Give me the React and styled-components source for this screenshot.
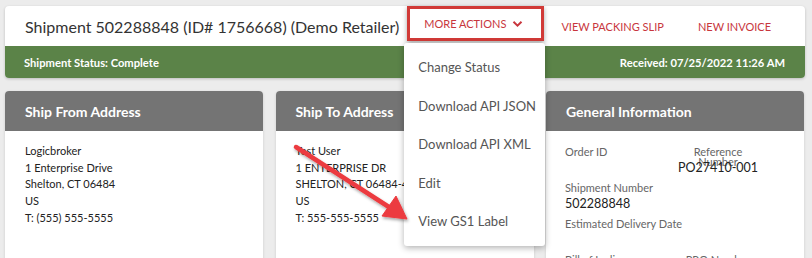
import styled, { createGlobalStyle } from "styled-components";

const GlobalStyle = createGlobalStyle`
  html, body {
    margin: 0;
    padding: 0;
    background: #ececec;
    font-family: Lato, "Open Sans", sans-serif;
    overflow: hidden;
  }
`;

const Page = styled.div`
  position: relative;
  height: 258px;
  overflow: hidden;
  padding: 6px 7px 0 5px;
  box-sizing: border-box;
`;

const HeaderCard = styled.div`
  background: #fff;
  border-radius: 4px;
  box-shadow: 0 1px 3px rgba(0, 0, 0, 0.2);
`;

const TitleRow = styled.div`
  display: flex;
  align-items: center;
  height: 40px;
  padding: 0 17px 0 20px;
`;

const Title = styled.h1`
  margin: 0;
  font-size: 16px;
  font-weight: 400;
  color: #333;
  white-space: nowrap;
`;

const Actions = styled.div`
  display: flex;
  align-items: center;
  margin-left: auto;
  height: 100%;
`;

const ActionWrap = styled.div`
  position: relative;
  display: flex;
  align-items: center;
  height: 100%;
`;

const ActionButton = styled.button`
  display: flex;
  align-items: center;
  gap: 6px;
  height: ${({ $highlight }) => ($highlight ? "35px" : "100%")};
  padding: ${({ $highlight }) => ($highlight ? "0 18px 0 14px" : "0 17px")};
  margin-top: ${({ $highlight }) => ($highlight ? "-5px" : "0")};
  border: ${({ $highlight }) => ($highlight ? "3px solid #d13a37" : "none")};
  box-shadow: ${({ $highlight }) =>
    $highlight ? "0 2px 5px rgba(0,0,0,0.35)" : "none"};
  background: transparent;
  font-family: inherit;
  font-size: 11px;
  color: #c8363d;
  text-transform: uppercase;
  white-space: nowrap;
  cursor: pointer;
`;

const Dropdown = styled.ul`
  position: absolute;
  top: 37px;
  left: -3px;
  width: 141px;
  margin: 0;
  padding: 5px 0;
  list-style: none;
  background: #fff;
  border-radius: 3px;
  box-shadow: 0 2px 6px rgba(0, 0, 0, 0.3);
  z-index: 5;
`;

const DropdownItem = styled.li`
  height: 38.5px;
  display: flex;
  align-items: center;
  padding-left: 14px;
  font-size: 13px;
  color: #555;
  white-space: nowrap;
`;

const StatusBar = styled.div`
  display: flex;
  justify-content: space-between;
  align-items: center;
  height: 32px;
  padding: 0 20px 0 19px;
  background: #5b8348;
  border-radius: 0 0 4px 4px;
  color: #fff;
  font-size: 11.2px;
  font-weight: 700;
`;

const CardGrid = styled.div`
  display: grid;
  grid-template-columns: repeat(3, 258px);
  column-gap: 12.5px;
  margin-top: 13px;
`;

const Card = styled.div`
  background: #fff;
  border-radius: 4px 4px 0 0;
  box-shadow: 0 1px 3px rgba(0, 0, 0, 0.15);
  height: 200px;
  overflow: hidden;
`;

const CardHeader = styled.div`
  height: 40px;
  display: flex;
  align-items: center;
  padding: 0 20px;
  background: #747474;
  color: #fff;
  font-size: 14px;
  font-weight: 700;
`;

const Address = styled.div`
  padding: 12px 20px;
  font-size: 11px;
  line-height: 16.7px;
  color: #222;
  white-space: nowrap;
`;

const InfoGrid = styled.div`
  display: grid;
  grid-template-columns: 108px 90px;
  row-gap: 7px;
  padding: 16px 19px;
`;

const Field = styled.div`
  text-align: ${({ $center }) => ($center ? "center" : "left")};
`;

const Label = styled.div`
  height: 13px;
  font-size: 11px;
  line-height: 10px;
  color: #666;
  white-space: ${({ $wrap }) => ($wrap ? "normal" : "nowrap")};
  padding: ${({ $wrap }) => ($wrap ? "0 14px" : "0")};
`;

const Value = styled.div`
  height: 16px;
  font-size: 12.5px;
  line-height: 16px;
  color: #222;
`;

const ArrowLayer = styled.svg`
  position: absolute;
  left: 0;
  top: 0;
  pointer-events: none;
  z-index: 10;
`;

function Chevron() {
  return (
    <svg width="11" height="8" viewBox="0 0 11 8">
      <path
        d="M1.5 1.8 L5.5 5.6 L9.5 1.8"
        fill="none"
        stroke="#c8363d"
        strokeWidth="2"
      />
    </svg>
  );
}

const menu = [
  "Change Status",
  "Download API JSON",
  "Download API XML",
  "Edit",
  "View GS1 Label",
];

export default function App() {
  return (
    <>
      <GlobalStyle />
      <Page>
        <HeaderCard>
          <TitleRow>
            <Title>Shipment 502288848 (ID# 1756668) (Demo Retailer)</Title>
            <Actions>
              <ActionWrap>
                <ActionButton $highlight>
                  More Actions <Chevron />
                </ActionButton>
                <Dropdown>
                  {menu.map((m) => (
                    <DropdownItem key={m}>{m}</DropdownItem>
                  ))}
                </Dropdown>
              </ActionWrap>
              <ActionButton>View Packing Slip</ActionButton>
              <ActionButton>New Invoice</ActionButton>
            </Actions>
          </TitleRow>
          <StatusBar>
            <span>Shipment Status: Complete</span>
            <span>Received: 07/25/2022 11:26 AM</span>
          </StatusBar>
        </HeaderCard>

        <CardGrid>
          <Card>
            <CardHeader>Ship From Address</CardHeader>
            <Address>
              Logicbroker
              <br />1 Enterprise Drive
              <br />
              Shelton, CT 06484
              <br />
              US
              <br />
              T: (555) 555-5555
            </Address>
          </Card>
          <Card>
            <CardHeader>Ship To Address</CardHeader>
            <Address>
              Test User
              <br />1 ENTERPRISE DR
              <br />
              SHELTON, CT 06484-4000
              <br />
              US
              <br />
              T: 555-555-5555
            </Address>
          </Card>
          <Card>
            <CardHeader>General Information</CardHeader>
            <InfoGrid>
              <Field>
                <Label>Order ID</Label>
                <Value />
              </Field>
              <Field $center>
                <Label $wrap>Reference Number</Label>
                <Value>PO27410-001</Value>
              </Field>
              <Field>
                <Label>Shipment Number</Label>
                <Value>502288848</Value>
              </Field>
              <Field />
              <Field>
                <Label>Estimated Delivery Date</Label>
                <Value />
              </Field>
              <Field />
              <Field>
                <Label>Bill of Lading</Label>
                <Value />
              </Field>
              <Field $center>
                <Label>PRO Number</Label>
                <Value />
              </Field>
            </InfoGrid>
          </Card>
        </CardGrid>

        <ArrowLayer width="812" height="258" viewBox="0 0 812 258">
          <defs>
            <filter id="sh" x="-20%" y="-20%" width="140%" height="140%">
              <feDropShadow dx="1" dy="2" stdDeviation="1.5" floodOpacity="0.35" />
            </filter>
          </defs>
          <g filter="url(#sh)" fill="#ec3a3f" stroke="#ec3a3f">
            <line
              x1="296"
              y1="147"
              x2="392"
              y2="209"
              strokeWidth="4.5"
              strokeLinecap="round"
            />
            <polygon
              points="407,219 382,216 396,196"
              strokeWidth="1"
              strokeLinejoin="round"
            />
          </g>
        </ArrowLayer>
      </Page>
    </>
  );
}
